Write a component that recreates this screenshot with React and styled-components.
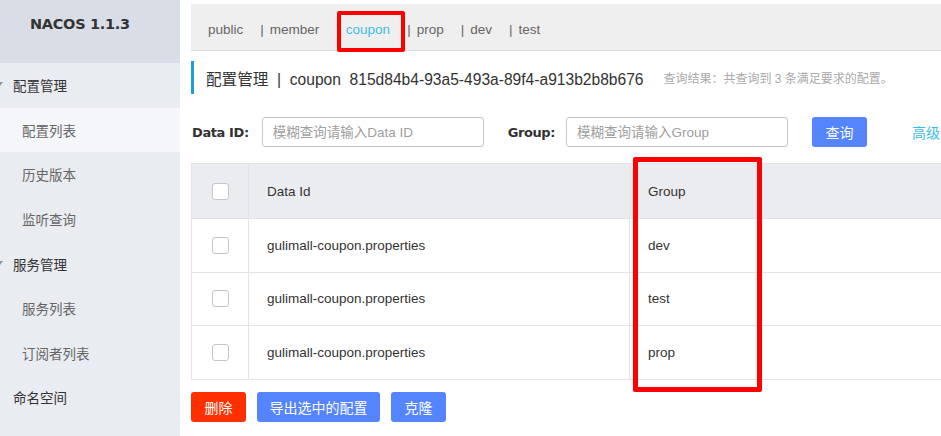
import React from "react";
import styled, { createGlobalStyle } from "styled-components";

const GlobalStyle = createGlobalStyle`
  html, body {
    margin: 0;
    padding: 0;
    background: #fff;
  }
  body {
    font-family: "Liberation Sans", "Noto Sans CJK SC", sans-serif;
    color: #333;
  }
  * {
    box-sizing: border-box;
  }
`;

const Page = styled.div`
  display: flex;
  width: 941px;
  height: 436px;
  overflow: hidden;
`;

const Sidebar = styled.div`
  width: 180px;
  flex: 0 0 180px;
  background: #e9ecf1;
  display: flex;
  flex-direction: column;
`;

const Logo = styled.div`
  height: 63px;
  background: #d9dee6;
  display: flex;
  align-items: center;
  padding-left: 30px;
  padding-bottom: 16px;
  font-family: "DejaVu Sans", sans-serif;
  font-weight: bold;
  font-size: 14.5px;
  color: #333;
  letter-spacing: -0.3px;
`;

const MenuItem = styled.div`
  position: relative;
  height: 44.6px;
  display: flex;
  align-items: center;
  padding-left: ${(props) => (props.$sub ? "22px" : "13px")};
  font-size: 13.5px;
  color: ${(props) => (props.$sub ? "#666" : "#333")};
  background: ${(props) => (props.$active ? "#f4f6f9" : "transparent")};
`;

const Caret = styled.span`
  position: absolute;
  left: -3px;
  top: 50%;
  margin-top: -3px;
  width: 0;
  height: 0;
  border-left: 3px solid transparent;
  border-right: 3px solid transparent;
  border-top: 4px solid #8a96a8;
`;

const Main = styled.div`
  flex: 1;
  padding: 4px 0 0 11px;
  display: flex;
  flex-direction: column;
  min-width: 0;
`;

const NamespaceBar = styled.div`
  height: 47px;
  flex: 0 0 47px;
  background: #efefef;
  border-bottom: 1px solid #dcdcdc;
  display: flex;
  align-items: center;
  padding: 5px 0 0 17px;
  font-size: 13.5px;
  line-height: 16px;
  color: #666;
`;

const Tab = styled.span`
  margin-right: 17px;
  white-space: nowrap;
  color: ${(props) => (props.$active ? "#3cbde6" : "#666")};
`;

const Pipe = styled.span`
  margin-right: 6px;
  visibility: ${(props) => (props.$ghost ? "hidden" : "visible")};
`;

const Name = styled.span`
  position: relative;
`;

const Highlight = styled.span`
  position: absolute;
  left: ${(props) => props.$left || "-9px"};
  top: ${(props) => props.$top || "-11px"};
  right: ${(props) => props.$right || "-15px"};
  bottom: ${(props) => props.$bottom || "-15px"};
  border: ${(props) => props.$w || "4px"} solid #ff0000;
  border-radius: 2px;
  pointer-events: none;
`;

const TitleRow = styled.div`
  margin-top: 10px;
  height: 33px;
  border-left: 3px solid #1a9fd8;
  display: flex;
  align-items: center;
  padding-left: 12px;
  white-space: nowrap;
`;

const TitleText = styled.span`
  font-size: 15.6px;
  color: #333;
`;

const ResultText = styled.span`
  font-size: 12px;
  color: #aaa;
  margin-left: 20px;
`;

const SearchRow = styled.div`
  margin-top: 23px;
  height: 30px;
  display: flex;
  align-items: center;
  white-space: nowrap;
`;

const Label = styled.span`
  font-family: "DejaVu Sans", sans-serif;
  font-weight: bold;
  font-size: 13px;
  letter-spacing: -0.4px;
  color: #333;
  margin-right: ${(props) => props.$gap || "13px"};
  margin-left: ${(props) => props.$offset || "1px"};
`;

const Input = styled.input`
  flex: 0 0 222px;
  width: 222px;
  height: 30px;
  border: 1px solid #c4c6cf;
  border-radius: 3px;
  padding: 0 10px;
  font-size: 13.5px;
  font-family: inherit;
  outline: none;
  &::placeholder {
    color: #a0a0a0;
  }
`;

const Button = styled.button`
  flex: 0 0 auto;
  height: 30px;
  min-width: 55px;
  padding: 0 ${(props) => props.$pad || "13px"};
  border: none;
  border-radius: 3px;
  background: ${(props) => (props.$danger ? "#ff3000" : "#5584ff")};
  color: #fff;
  font-size: 14px;
  font-family: inherit;
  margin-left: ${(props) => props.$offset || "0"};
`;

const LinkText = styled.span`
  color: #3cbde6;
  font-size: 14px;
  margin-left: 45px;
`;

const TableWrap = styled.div`
  position: relative;
  margin-top: 16px;
`;

const Table = styled.div`
  border: 1px solid #e3e4e8;
  border-right: none;
`;

const Row = styled.div`
  display: grid;
  grid-template-columns: 57px 381px 1fr;
  height: ${(props) => (props.$head ? "54px" : "53.5px")};
  background: ${(props) => (props.$head ? "#ebecf0" : "#fff")};
  border-top: ${(props) => (props.$head ? "none" : "1px solid #e3e4e8")};
`;

const Cell = styled.div`
  display: flex;
  align-items: center;
  justify-content: ${(props) => (props.$center ? "center" : "flex-start")};
  padding-left: ${(props) => (props.$center ? "0" : "18px")};
  border-right: ${(props) => (props.$last ? "none" : "1px solid #e3e4e8")};
  font-size: 13.5px;
  color: #333;
  white-space: nowrap;
`;

const Checkbox = styled.span`
  width: 17px;
  height: 17px;
  border: 1px solid #c4c6cf;
  border-radius: 3px;
  background: #fff;
`;

const Actions = styled.div`
  margin-top: 12px;
  display: flex;
  gap: 11px;
`;

const namespaces = ["public", "member", "coupon", "prop", "dev", "test"];
const rows = ["dev", "test", "prop"];

const App = () => {
  return (
    <>
      <GlobalStyle />
      <Page>
        <Sidebar>
          <Logo>NACOS 1.1.3</Logo>
          <MenuItem>
            <Caret />
            配置管理
          </MenuItem>
          <MenuItem $sub $active>
            配置列表
          </MenuItem>
          <MenuItem $sub>历史版本</MenuItem>
          <MenuItem $sub>监听查询</MenuItem>
          <MenuItem>
            <Caret />
            服务管理
          </MenuItem>
          <MenuItem $sub>服务列表</MenuItem>
          <MenuItem $sub>订阅者列表</MenuItem>
          <MenuItem>命名空间</MenuItem>
        </Sidebar>
        <Main>
          <NamespaceBar>
            {namespaces.map((ns, i) => (
              <Tab key={ns} $active={ns === "coupon"}>
                {i > 0 && <Pipe $ghost={ns === "coupon"}>|</Pipe>}
                <Name>
                  {ns}
                  {ns === "coupon" && <Highlight />}
                </Name>
              </Tab>
            ))}
          </NamespaceBar>
          <TitleRow>
            <TitleText>
              配置管理 &nbsp;|&nbsp; coupon &nbsp;815d84b4-93a5-493a-89f4-a913b2b8b676
            </TitleText>
            <ResultText>查询结果：共查询到 3 条满足要求的配置。</ResultText>
          </TitleRow>
          <SearchRow>
            <Label>Data ID:</Label>
            <Input placeholder="模糊查询请输入Data ID" />
            <Label $offset="24px" $gap="11px">Group:</Label>
            <Input placeholder="模糊查询请输入Group" />
            <Button $offset="24px">查询</Button>
            <LinkText>高级查询</LinkText>
          </SearchRow>
          <TableWrap>
            <Table>
              <Row $head>
                <Cell $center>
                  <Checkbox />
                </Cell>
                <Cell>Data Id</Cell>
                <Cell $last>Group</Cell>
              </Row>
              {rows.map((g) => (
                <Row key={g}>
                  <Cell $center>
                    <Checkbox />
                  </Cell>
                  <Cell>gulimall-coupon.properties</Cell>
                  <Cell $last>{g}</Cell>
                </Row>
              ))}
            </Table>
            <Highlight $left="442px" $top="-6px" $right="179px" $bottom="-12px" $w="5px" />
          </TableWrap>
          <Actions>
            <Button $danger $pad="13px">删除</Button>
            <Button $pad="12.5px">导出选中的配置</Button>
            <Button $pad="13px">克隆</Button>
          </Actions>
        </Main>
      </Page>
    </>
  );
};

export default App;
